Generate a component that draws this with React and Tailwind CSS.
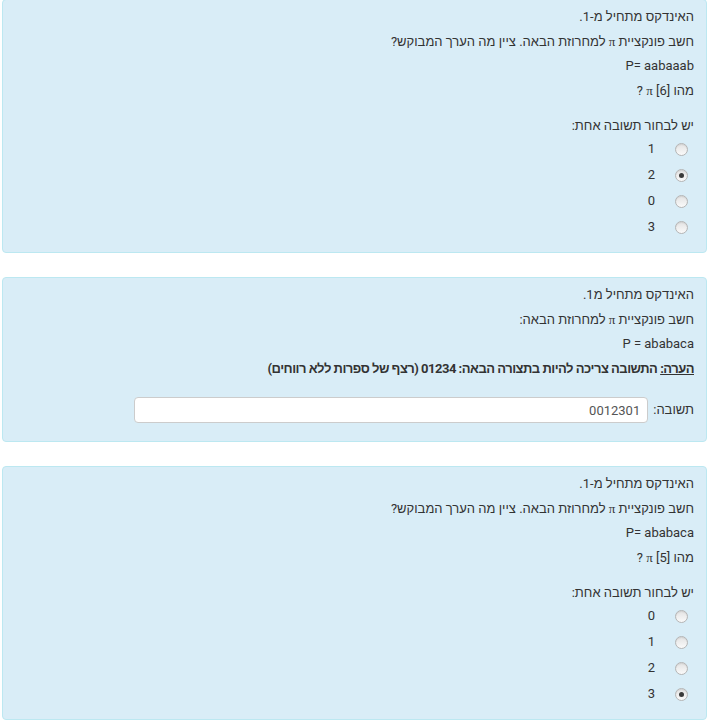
import React from 'react';

const Pi = () => <span className="font-['Liberation_Serif',serif]">π</span>;

const Radio = ({ checked }) => (
  <span className="relative inline-flex h-[13px] w-[13px] items-center justify-center rounded-full border border-[#b5b5b5] bg-gradient-to-b from-[#e3e3e3] to-[#fafafa] shadow-[inset_0_1px_1px_rgba(0,0,0,0.08)]">
    {checked && <span className="h-[5px] w-[5px] rounded-full bg-[#3a3a3a]" />}
  </span>
);

const Options = ({ items, selected }) => (
  <div>
    {items.map((n) => (
      <div key={n} className="flex h-[26px] items-center pr-[6px]">
        <Radio checked={n === selected} />
        <span className="mr-[20px]">{n}</span>
      </div>
    ))}
  </div>
);

const Card = ({ children, className = '' }) => (
  <div className={`mr-[4px] w-[705px] rounded-[4px] border border-[#bce8f1] bg-[#d9edf7] pl-3 pr-[12px] pt-[5px] ${className}`}>
    {children}
  </div>
);

const Line = ({ children, className = '' }) => (
  <div className={`leading-[24.5px] ${className}`}>{children}</div>
);

const App = () => {
  return (
    <div dir="rtl" className="min-h-[726px] bg-white font-[Roboto,'Liberation_Sans',sans-serif] text-[13px] text-[#333]">
      {/* Question 1 */}
      <Card className="-mt-px pb-[12px]">
        <Line>האינדקס מתחיל מ-1.</Line>
        <Line>חשב פונקציית <Pi /> למחרוזת הבאה. ציין מה הערך המבוקש?</Line>
        <Line>P= aabaaab</Line>
        <Line>מהו [6] <Pi /> ?</Line>
        <div className="mt-[13px] leading-[20px]">יש לבחור תשובה אחת:</div>
        <Options items={['1', '2', '0', '3']} selected="2" />
      </Card>

      {/* Question 2 */}
      <Card className="mt-[24px] pb-[18px]">
        <Line>האינדקס מתחיל מ1.</Line>
        <Line>חשב פונקציית <Pi /> למחרוזת הבאה:</Line>
        <Line>P = ababaca</Line>
        <Line className="font-bold tracking-[-0.5px]">
          <span className="underline">הערה:</span> התשובה צריכה להיות בתצורה הבאה: 01234 (רצף של ספרות ללא רווחים)
        </Line>
        <div className="mt-[16px] flex items-center gap-[5px]">
          <span>תשובה:</span>
          <input
            type="text"
            readOnly
            value="0012301"
            className="h-[26px] w-[514px] rounded-[4px] border border-[#ccc] bg-white px-[7px] text-[13px] text-[#555] outline-none"
          />
        </div>
      </Card>

      {/* Question 3 */}
      <Card className="mt-[24px] pb-[12px]">
        <Line>האינדקס מתחיל מ-1.</Line>
        <Line>חשב פונקציית <Pi /> למחרוזת הבאה. ציין מה הערך המבוקש?</Line>
        <Line>P= ababaca</Line>
        <Line>מהו [5] <Pi /> ?</Line>
        <div className="mt-[13px] leading-[20px]">יש לבחור תשובה אחת:</div>
        <Options items={['0', '1', '2', '3']} selected="3" />
      </Card>
    </div>
  );
};

export default App;
